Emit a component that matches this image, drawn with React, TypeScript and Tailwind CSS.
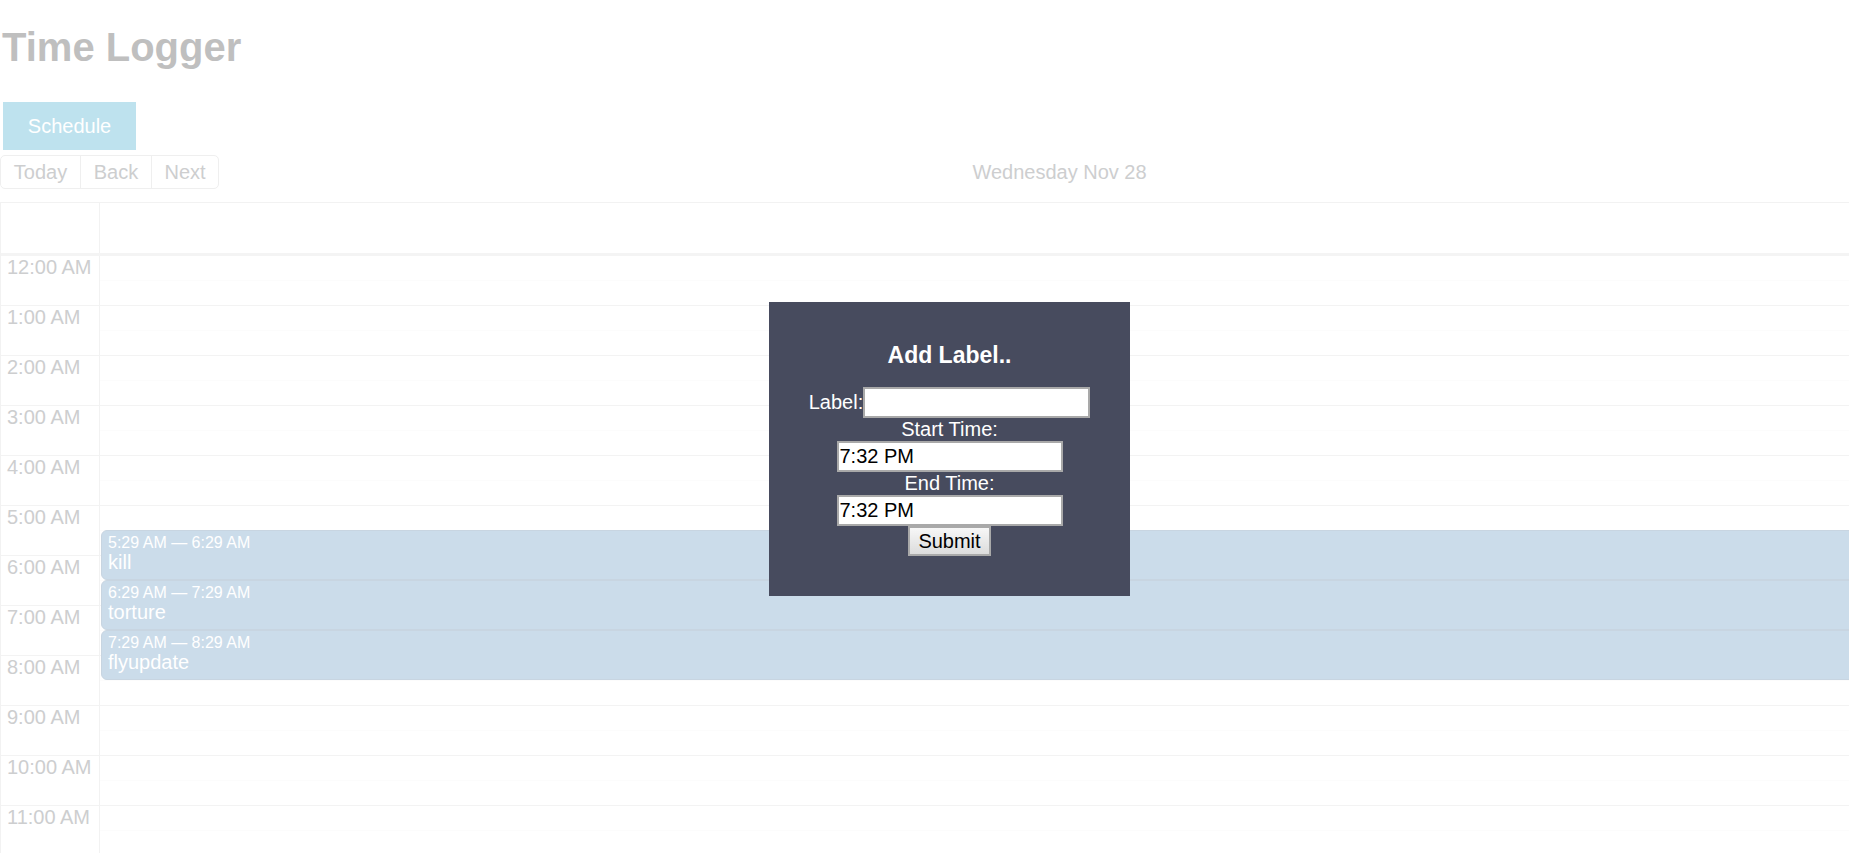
import React from "react";

const hours = [
  "12:00 AM", "1:00 AM", "2:00 AM", "3:00 AM", "4:00 AM", "5:00 AM",
  "6:00 AM", "7:00 AM", "8:00 AM", "9:00 AM", "10:00 AM", "11:00 AM",
  "12:00 PM", "1:00 PM",
];

const events = [
  { time: "5:29 AM — 6:29 AM", title: "kill", top: 274 },
  { time: "6:29 AM — 7:29 AM", title: "torture", top: 324 },
  { time: "7:29 AM — 8:29 AM", title: "flyupdate", top: 374 },
];

export default function App() {
  return (
    <div className="relative w-full h-[853px] overflow-hidden bg-white font-['Liberation_Sans',Arial,sans-serif]">
      <div className="w-[1900px]">
        <h1 className="mt-[24px] pl-[2px] text-[40px] leading-[46px] font-bold text-[#bfbfbf]">
          Time Logger
        </h1>
        <button className="mt-[32px] ml-[3px] w-[133px] h-[48px] bg-[#bee2ee] text-white text-[20px] leading-[23px] block">
          Schedule
        </button>

        <div className="mt-[5px] flex items-center h-[34px]">
          <div className="flex h-[34px]">
            <button className="w-[81px] h-[34px] border border-[#efefef] rounded-l-[5px] text-[20px] text-[#cdcecf]">
              Today
            </button>
            <button className="-ml-px w-[72px] h-[34px] border border-[#efefef] text-[20px] text-[#cdcecf]">
              Back
            </button>
            <button className="-ml-px w-[68px] h-[34px] border border-[#efefef] rounded-r-[5px] text-[20px] text-[#cdcecf]">
              Next
            </button>
          </div>
          <div className="flex-1 text-center text-[20px] text-[#cdcecf] leading-[23px]">
            Wednesday Nov 28
          </div>
        </div>

        <div className="mt-[13px] border-l border-t border-[#f2f2f2]">
          <div className="flex h-[50px]">
            <div className="w-[99px] border-r border-[#f2f2f2]" />
            <div className="flex-1" />
          </div>
          <div className="border-t-[3px] border-[#f4f4f4] flex">
            <div className="w-[99px] border-r border-[#f2f2f2] shrink-0">
              {hours.map((h) => (
                <div
                  key={h}
                  className="h-[50px] border-b border-[#f3f3f3] pl-[6px] text-[20px] leading-[22px] text-[#cdcecf]"
                >
                  {h}
                </div>
              ))}
            </div>
            <div className="relative flex-1">
              {hours.map((h) => (
                <div key={h} className="h-[50px] border-b border-[#f3f3f3]">
                  <div className="h-[24px]" />
                  <div className="border-t border-[#fcfcfc]" />
                </div>
              ))}
              {events.map((e) => (
                <div
                  key={e.title}
                  className="absolute left-[1px] right-0 h-[50px] rounded-[6px] border border-[#c8d5e1] bg-[#cbdcea] px-[6px] pt-[3px] text-white"
                  style={{ top: e.top }}
                >
                  <div className="text-[16px] leading-[17px]">{e.time}</div>
                  <div className="text-[20px] leading-[22px]">{e.title}</div>
                </div>
              ))}
            </div>
          </div>
        </div>
      </div>

      <div className="absolute left-[769px] top-[302px] w-[361px] h-[294px] bg-[#474b5e] flex flex-col items-center pt-[40px] text-white">
        <h3 className="text-[23px] leading-[26px] font-bold">Add Label..</h3>
        <div className="mt-[19px] flex items-center">
          <span className="text-[20px] leading-[23px]">Label:</span>
          <input
            className="w-[227px] h-[31px] bg-white border-2 border-[#a9a9a9] text-black text-[20px] px-[1px] outline-none"
            defaultValue=""
          />
        </div>
        <div className="text-[20px] leading-[23px]">Start Time:</div>
        <input
          className="w-[226px] h-[31px] bg-white border-2 border-[#a9a9a9] text-black text-[20px] px-[1px] outline-none"
          defaultValue="7:32 PM"
        />
        <div className="text-[20px] leading-[23px]">End Time:</div>
        <input
          className="w-[226px] h-[31px] bg-white border-2 border-[#a9a9a9] text-black text-[20px] px-[1px] outline-none"
          defaultValue="7:32 PM"
        />
        <button className="w-[83px] h-[30px] border-2 border-[#a9a9a9] bg-gradient-to-b from-[#f7f7f7] to-[#dcdcdc] text-black text-[20px] leading-[23px]">
          Submit
        </button>
      </div>
    </div>
  );
}
